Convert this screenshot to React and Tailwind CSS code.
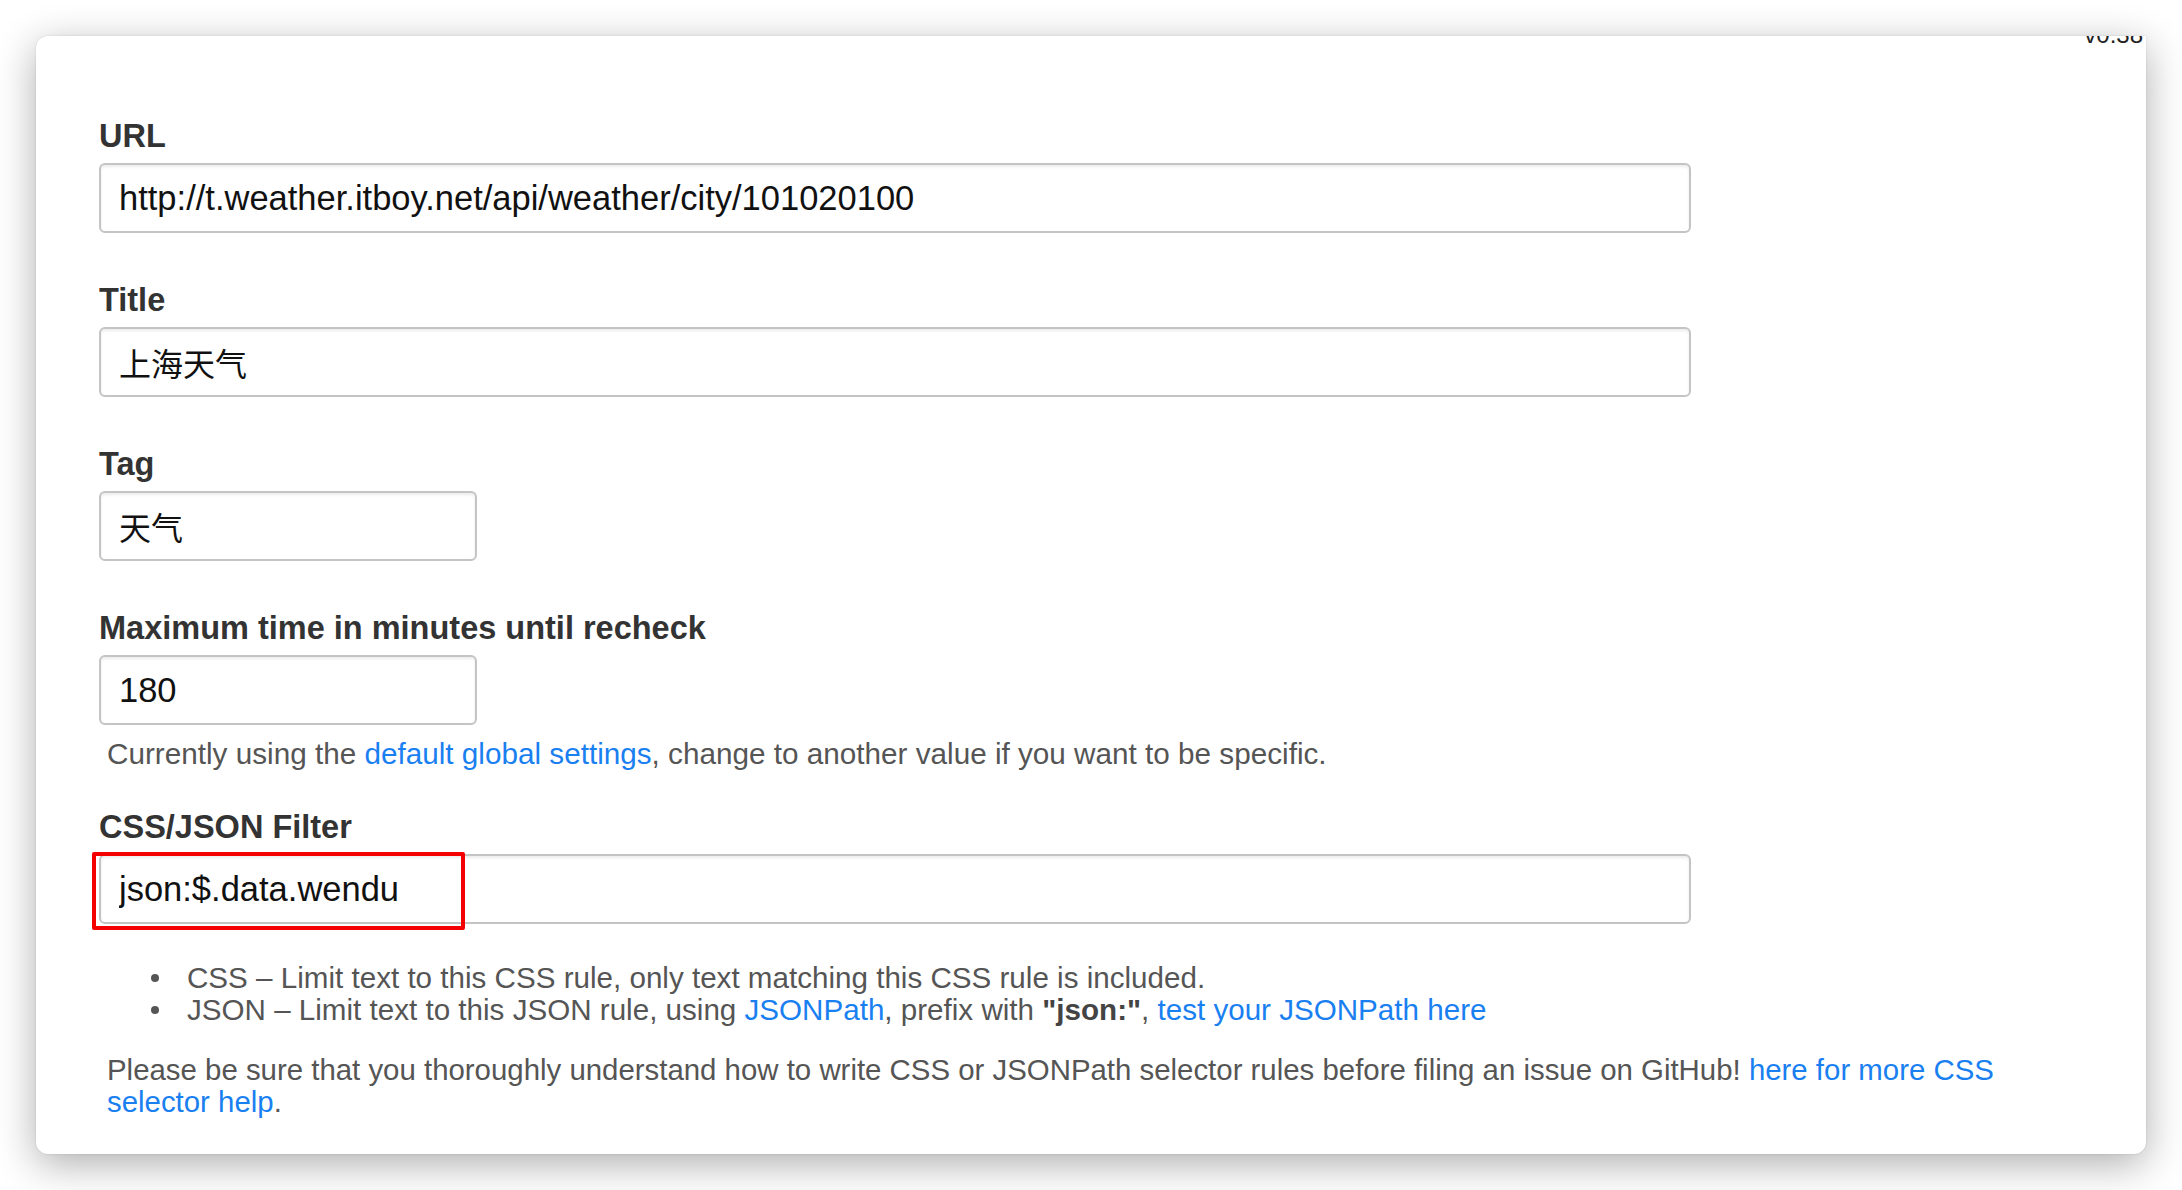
const font = { fontFamily: '"Liberation Sans", "Noto Sans CJK SC", Arial, sans-serif' }

function Field({ label, value, wide = true, cjk = false, children, last = false }) {
  return (
    <div className={last ? '' : 'mb-[48px]'}>
      <div className="mb-[8px] text-[32.5px] font-bold leading-[38px] text-[#333]">{label}</div>
      <div className="relative">
        <input
          readOnly
          value={value}
          style={font}
          className={`${wide ? 'w-[1592px]' : 'w-[378px]'} ${cjk ? 'text-[32px]' : 'text-[34.5px]'} block h-[70px] rounded-[6px] border-2 border-[#c4c4c4] bg-white px-[18px] text-[#111] shadow-[inset_0_2px_3px_rgba(0,0,0,0.08)] outline-none`}
        />
        {children}
      </div>
    </div>
  )
}

function Bullet({ children }) {
  return (
    <li className="flex items-center">
      <span className="mr-[28px] h-[8px] w-[8px] shrink-0 rounded-full bg-[#555]" />
      <span>{children}</span>
    </li>
  )
}

export default function App() {
  return (
    <div className="h-[1190px] w-full overflow-hidden bg-white px-[36px] pt-[36px]" style={font}>
      <div className="relative overflow-hidden rounded-[12px] rounded-tr-none bg-white pb-[36px] pl-[63px] pr-[63px] pt-[81px] shadow-[0_10px_40px_rgba(0,0,0,0.32),0_0_2px_rgba(0,0,0,0.15)]">
        {/* version tag, clipped at the top edge */}
        <div className="absolute right-[3px] top-[-13px] text-[24px] leading-[24px] text-[#222]">v0.38</div>

        <Field label="URL" value="http://t.weather.itboy.net/api/weather/city/101020100" />
        <Field label="Title" value="上海天气" cjk />
        <Field label="Tag" value="天气" wide={false} cjk />

        <Field label="Maximum time in minutes until recheck" value="180" wide={false} last />
        <p className="ml-[8px] mt-[13px] text-[29.7px] leading-[32px] text-[#555]">
          Currently using the <a className="text-[#1a7ff0]">default global settings</a>, change to another value if you want to be specific.
        </p>

        <div className="mt-[38px]">
          <Field label="CSS/JSON Filter" value="json:$.data.wendu" last>
            <div className="pointer-events-none absolute left-[-7px] top-[-2px] h-[78px] w-[373px] rounded-[2px] border-4 border-[#f50000]" />
          </Field>
        </div>

        <ul className="mt-[38px] pl-[52px] text-[29.6px] leading-[32px] text-[#555]">
          <Bullet>CSS – Limit text to this CSS rule, only text matching this CSS rule is included.</Bullet>
          <Bullet>
            JSON – Limit text to this JSON rule, using <a className="text-[#1a7ff0]">JSONPath</a>, prefix with{' '}
            <b className="text-[#444]">"json:"</b>, <a className="text-[#1a7ff0]">test your JSONPath here</a>
          </Bullet>
        </ul>

        <p className="ml-[8px] mt-[28px] text-[29.4px] leading-[32px] text-[#555]">
          Please be sure that you thoroughly understand how to write CSS or JSONPath selector rules before filing an issue on GitHub!{' '}
          <a className="text-[#1a7ff0]">here for more CSS selector help</a>.
        </p>
      </div>
    </div>
  )
}
